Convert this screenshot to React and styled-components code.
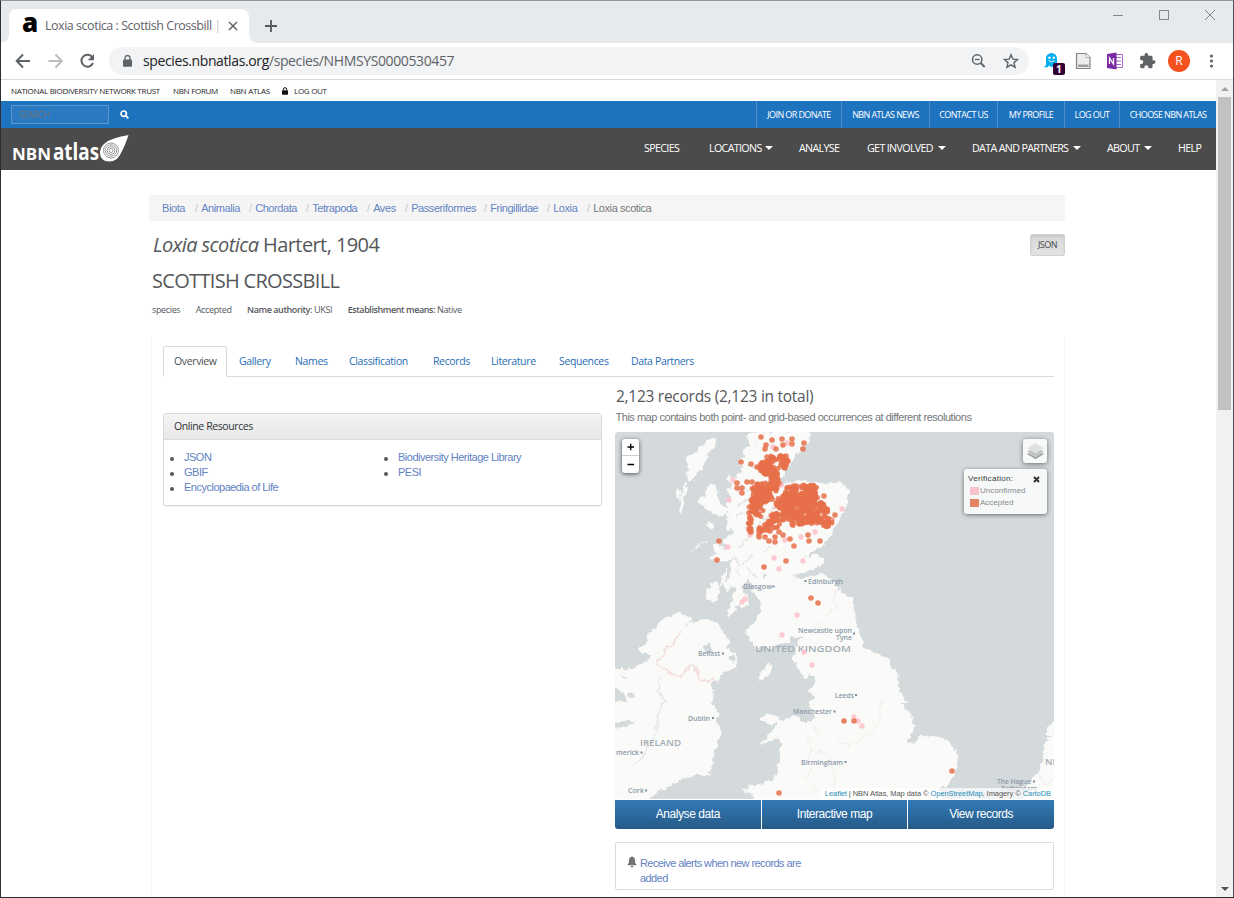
import React from 'react';
import styled, { createGlobalStyle } from 'styled-components';

const GlobalStyle = createGlobalStyle`
  *, *::before, *::after { box-sizing: border-box; }
  html, body { margin: 0; padding: 0; overflow: hidden; background: #fff; }
  body { font-family: 'Open Sans', 'Noto Sans', sans-serif; color: #4a4d50; }
  a { text-decoration: none; color: inherit; }
`;

const sans = `'Open Sans', 'Noto Sans', sans-serif`;
const arial = `'Liberation Sans', Arial, sans-serif`;

/* ---------- browser window ---------- */

const Window = styled.div`
  width: 1234px;
  height: 898px;
  display: flex;
  flex-direction: column;
  border: 1px solid #2b2f36;
  border-top-color: #94979b;
  border-right-color: #4b5058;
  background: #fff;
  overflow: hidden;
`;

const TabStrip = styled.div`
  flex: 0 0 42px;
  display: flex;
  align-items: flex-end;
  padding-left: 8px;
  background: #e6eaed;
`;

const BrowserTab = styled.div`
  position: relative;
  width: 240px;
  height: 34px;
  display: flex;
  align-items: center;
  padding: 0 9px 0 13px;
  border-radius: 8px 8px 0 0;
  background: #fff;
  &::before, &::after {
    content: '';
    position: absolute;
    bottom: 0;
    width: 8px;
    height: 8px;
  }
  &::before {
    left: -8px;
    background: radial-gradient(circle at 0 0, transparent 7.5px, #fff 8px);
  }
  &::after {
    right: -8px;
    background: radial-gradient(circle at 100% 0, transparent 7.5px, #fff 8px);
  }
`;

const Favicon = styled.div`
  width: 15px;
  flex: none;
  margin-top: -8px;
  font-size: 26px;
  line-height: 34px;
  font-weight: 800;
  letter-spacing: -1px;
  color: #000;
`;

const TabTitle = styled.div`
  width: 174px;
  margin-left: 8px;
  padding-bottom: 1px;
  font-size: 12.5px;
  letter-spacing: -0.47px;
  color: #5f6368;
  white-space: nowrap;
  span { color: #c4c6c9; }
`;

const CloseTab = styled.svg`
  width: 10px;
  height: 10px;
  margin-left: auto;
  margin-right: 2px;
  flex: none;
`;

const NewTab = styled.svg`
  width: 14px;
  height: 14px;
  margin: 0 0 10px 15px;
`;

const WindowButtons = styled.svg`
  width: 104px;
  height: 14px;
  margin: 0 17px 21px auto;
`;

const Toolbar = styled.div`
  flex: 0 0 37px;
  display: flex;
  align-items: center;
  padding: 0 12px 0 13px;
  border-bottom: 1px solid #d8dadd;
  background: #fff;
`;

const NavIcons = styled.svg`
  width: 84px;
  height: 20px;
  flex: none;
`;

const AddressBar = styled.div`
  width: 920px;
  height: 28px;
  display: flex;
  align-items: center;
  margin-left: 11px;
  padding: 0 9px 0 14px;
  border-radius: 14px;
  background: #f1f3f4;
  font-size: 14px;
  letter-spacing: -0.38px;
  color: #5f6368;
  b { font-weight: 400; color: #202124; }
  span { padding-bottom: 1px; }
`;

const LockIcon = styled.svg`
  width: 9px;
  height: 12px;
  margin-right: 11px;
`;

const BarIcons = styled.svg`
  width: 50px;
  height: 18px;
  margin-left: auto;
`;

const Extensions = styled.svg`
  width: 176px;
  height: 28px;
  margin-left: 14px;
`;

const Body = styled.div`
  flex: 1;
  min-height: 0;
  display: flex;
`;

const Page = styled.div`
  width: 1215px;
  flex: none;
  display: flex;
  flex-direction: column;
  overflow: hidden;
`;

const Scrollbar = styled.div`
  flex: 1;
  display: flex;
  flex-direction: column;
  align-items: center;
  padding: 7px 0 6px;
  background: #f1f1f1;
`;

const Arrow = styled.i`
  width: 0;
  height: 0;
  border: 4px solid transparent;
  ${p => (p.$down ? 'border-top-color:#505050; border-bottom:0; margin-top:auto;' : 'border-bottom-color:#a3a3a3; border-top:0;')}
`;

const Thumb = styled.div`
  width: 13px;
  height: 313px;
  margin-top: 6px;
  background: #c1c1c1;
`;

/* ---------- site header ---------- */

const TopLinks = styled.div`
  flex: 0 0 21px;
  display: flex;
  align-items: center;
  padding: 0 0 0 10px;
  font-size: 8px;
  letter-spacing: -0.29px;
  color: #1d1d1d;
  white-space: nowrap;
  a { flex: none; width: 149px; margin-right: 13px; }
  a + a { width: 44px; }
  a + a + a { width: 39px; }
  svg { width: 6px; height: 8px; margin: 0 6px 0 0; }
`;

const BlueBar = styled.div`
  flex: 0 0 27px;
  display: flex;
  align-items: center;
  padding-left: 10px;
  background: #1e73be;
`;

const SearchBox = styled.div`
  width: 98px;
  height: 19px;
  padding: 3px 7px;
  border: 1px solid #5a97d0;
  background: #2b7ac1;
  color: #6f7479;
  font-size: 9px;
  line-height: 12px;
  letter-spacing: -0.5px;
`;

const SearchIcon = styled.svg`
  width: 9px;
  height: 9px;
  margin-left: 11px;
`;

const UtilityNav = styled.nav`
  height: 100%;
  display: flex;
  margin-left: auto;
`;

const UtilityLink = styled.a`
  width: ${p => p.$w}px;
  display: flex;
  align-items: center;
  justify-content: center;
  border-left: 1px solid #4b8fcb;
  color: #fff;
  font-size: 9px;
  letter-spacing: -0.6px;
  font-weight: 500;
  white-space: nowrap;
`;

const DarkBar = styled.div`
  flex: 0 0 42px;
  display: flex;
  align-items: flex-start;
  padding: 6px 13px 0 10px;
  background: #4b4b4b;
`;

const Logo = styled.svg`
  width: 120px;
  height: 30px;
  text { font-family: 'Open Sans', sans-serif; fill: #fff; }
`;

const MainNav = styled.nav`
  display: flex;
  gap: 26px;
  margin: 6px 0 0 auto;
`;

const MainLink = styled.a`
  width: ${p => p.$w}px;
  display: flex;
  align-items: center;
  justify-content: space-between;
  color: #fff;
  font-size: 10.7px;
  line-height: 16px;
  letter-spacing: -0.65px;
  font-weight: 500;
  white-space: nowrap;
`;

const Caret = styled.i`
  width: 0;
  height: 0;
  border: 4px solid transparent;
  border-top-color: #fff;
  border-bottom: 0;
`;

/* ---------- content ---------- */

const Content = styled.main`
  width: 916px;
  margin: 25px 0 0 148px;
  display: flex;
  flex-direction: column;
  flex: 1;
  min-height: 0;
`;

const Breadcrumb = styled.nav`
  height: 26px;
  display: flex;
  align-items: center;
  padding-left: 13px;
  border-radius: 3px;
  background: #f5f5f5;
  font: 11px ${arial};
  letter-spacing: -0.42px;
  color: #777;
  white-space: nowrap;
`;

const Crumb = styled.a`
  width: ${p => p.$w}px;
  color: ${p => (p.$last ? '#777b80' : '#6484c4')};
  &:not(:first-child)::before { content: '/'; color: #c8c8c8; margin-right: 3.5px; }
`;

const TitleRow = styled.div`
  display: flex;
  justify-content: space-between;
  padding: 13px 0 0 4px;
  font-size: 20px;
  line-height: 22px;
  letter-spacing: -0.58px;
  color: #54575a;
`;

const JsonButton = styled.button`
  width: 35px;
  height: 22px;
  padding: 0 0 1px;
  border: 1px solid #d0d0d0;
  border-radius: 2px;
  background: linear-gradient(#d9d9d9, #e2e2e2);
  box-shadow: inset 0 2px 3px rgba(0, 0, 0, 0.08);
  font-family: ${sans};
  font-size: 9px;
  letter-spacing: -0.5px;
  color: #45494d;
`;

const CommonName = styled.h2`
  margin: 14px 0 0 3px;
  font-size: 20px;
  line-height: 22px;
  font-weight: 400;
  letter-spacing: -0.68px;
  color: #54575a;
`;

const Meta = styled.div`
  display: flex;
  gap: 15.5px;
  margin: 11px 0 0 3px;
  font-size: 9px;
  line-height: 14px;
  letter-spacing: -0.36px;
  color: #55595d;
  white-space: nowrap;
  strong { font-weight: 600; letter-spacing: -0.42px; }
`;

const Section = styled.section`
  flex: 1;
  min-height: 0;
  margin: 19px 0 0 2px;
  padding: 10px 10px 0 11px;
  border: 1px solid #f7f7f7;
  border-top: 0;
  border-bottom: 0;
`;

const Tabs = styled.nav`
  display: flex;
  height: 31px;
  border-bottom: 1px solid #d9d9d9;
`;

const Tab = styled.a`
  width: ${p => p.$w}px;
  height: ${p => (p.$active ? 31 : 30)}px;
  padding: 0 0 ${p => (p.$active ? 2 : 1)}px ${p => (p.$active ? 10 : 12)}px;
  display: flex;
  align-items: center;
  ${p => p.$active && `
    border: 1px solid #d9d9d9;
    border-bottom-color: #fff;
    border-radius: 3px 3px 0 0;
    background: #fff;
  `}
  font-size: 10.5px;
  letter-spacing: -0.36px;
  color: ${p => (p.$active ? '#4c4f52' : '#1f6db5')};
  white-space: nowrap;
`;

const Columns = styled.div`
  display: flex;
  justify-content: space-between;
`;

const Left = styled.div`
  width: 439px;
  padding-top: 36px;
`;

const Panel = styled.div`
  height: 93px;
  border: 1px solid #d9d9d9;
  border-radius: 3px;
  box-shadow: 0 1px 1px rgba(0, 0, 0, 0.06);
`;

const PanelHead = styled.div`
  height: 26px;
  padding: 0 10px;
  border-bottom: 1px solid #d9d9d9;
  background: linear-gradient(#f4f4f4, #e7e7e7);
  font-size: 10.5px;
  line-height: 24px;
  letter-spacing: -0.4px;
  color: #2f3234;
`;

const Lists = styled.div`
  display: flex;
  padding: 10px 0 0 20px;
`;

const List = styled.ul`
  width: 214px;
  flex: none;
  margin: 0;
  padding: 0;
  list-style: none;
  font: 11px/15px ${arial};
  letter-spacing: -0.5px;
  color: #6282c2;
  white-space: nowrap;
  & + & { width: 200px; }
`;

const ListItem = styled.li`
  display: flex;
  align-items: center;
  &::before {
    content: '';
    width: 4px;
    height: 4px;
    margin: 2px 10px 0 -14px;
    border-radius: 50%;
    background: #54575b;
  }
`;

const Right = styled.div`
  width: 439px;
`;

const RecordsTitle = styled.h3`
  margin: 8px 0 0;
  padding-left: 1px;
  font-size: 15.5px;
  line-height: 22px;
  font-weight: 400;
  letter-spacing: -0.27px;
  color: #54575a;
`;

const MapNote = styled.div`
  margin: 2px 0 6px;
  padding-left: 0.5px;
  font: 11px/17px ${arial};
  letter-spacing: -0.48px;
  color: #74777a;
  white-space: nowrap;
`;

const MapBox = styled.div`
  position: relative;
  height: 367px;
  border-radius: 3px 3px 0 0;
  overflow: hidden;
  background: #d4dadc;
  font-family: ${arial};
  > svg { display: block; }
`;

const ZoomControl = styled.div`
  position: absolute;
  left: 7px;
  top: 7px;
  width: 17px;
  height: 34px;
  border-radius: 3px;
  background: #fff;
  box-shadow: 0 1px 4px rgba(0, 0, 0, 0.65);
  svg { display: block; }
`;

const LayersControl = styled.div`
  position: absolute;
  right: 7px;
  top: 7px;
  width: 24px;
  height: 24px;
  border-radius: 3px;
  background: #f8fafa;
  box-shadow: 0 1px 5px rgba(0, 0, 0, 0.5);
`;

const Legend = styled.div`
  position: absolute;
  right: 7px;
  top: 37px;
  width: 83px;
  height: 45px;
  padding: 4px 7px 0 4px;
  border-radius: 3px;
  background: #f7f9f9;
  box-shadow: 0 1px 4px rgba(0, 0, 0, 0.5);
  font-size: 8px;
  line-height: 12px;
  color: #888b8d;
`;

const LegendHead = styled.div`
  display: flex;
  justify-content: space-between;
  align-items: center;
  color: #3a3c3e;
  letter-spacing: 0.3px;
`;

const LegendRow = styled.div`
  display: flex;
  align-items: center;
  padding-left: 2px;
  &::before {
    content: '';
    width: 9px;
    height: 8px;
    margin-right: 1px;
    background: ${p => p.$color};
  }
`;

const Attribution = styled.div`
  position: absolute;
  right: 0;
  bottom: 0;
  height: 11px;
  padding: 0 3px 0 4px;
  background: rgba(255, 255, 255, 0.7);
  font-size: 7.5px;
  line-height: 11px;
  letter-spacing: -0.07px;
  color: #555;
  white-space: nowrap;
  a { color: #2a8fb8; }
`;

const Actions = styled.div`
  display: flex;
  gap: 1px;
  height: 29px;
  margin-top: 1px;
  border-radius: 0 0 3px 3px;
  overflow: hidden;
`;

const Action = styled.a`
  flex: 1;
  display: flex;
  align-items: center;
  justify-content: center;
  padding-bottom: 1px;
  background: linear-gradient(#337ab7, #265a88);
  color: #fff;
  font: 12px ${arial};
  letter-spacing: -0.44px;
`;

const AlertBox = styled.div`
  height: 48px;
  display: flex;
  margin-top: 13px;
  padding: 13px 0 0 11px;
  border: 1px solid #dcdcdc;
  border-radius: 2px;
  font: 11px/15px ${arial};
  letter-spacing: -0.58px;
  color: #6282c2;
  svg { width: 10px; height: 12px; margin: 0 3px 0 0; }
  div { width: 170px; }
`;

const SCOTLAND = 'M750 432 L810 432 L809 438 L807 443 L801 448 L797 453 L792 460 L788 467 L785 473 L782 479 L776 487 L774 492 L780 487 L787 482 L793 482 L803 480 L817 484 L830 484 L840 483 L846 486 L849 493 L847 499 L845 505 L843 513 L840 518 L836 525 L832 531 L827 540 L822 545 L817 549 L809 553 L803 558 L813 555 L819 556 L823 559 L817 567 L810 570 L803 571 L795 575 L790 577 L800 578 L812 577 L822 574 L829 577 L836 585 L842 593 L851 599 L854 606 L855 620 L859 632 L862 641 L866 649 L878 653 L886 658 L892 668 L899 677 L897 685 L900 692 L906 703 L902 704 L896 700 L891 698 L895 700 L903 705 L909 712 L912 718 L914 727 L911 735 L905 740 L910 744 L914 743 L918 737 L928 736 L937 737 L948 740 L954 747 L957 755 L956 771 L950 782 L943 786 L936 790 L940 793 L938 803 L756 803 L752 793 L742 790 L750 786 L762 784 L772 779 L777 773 L779 764 L781 756 L778 750 L783 743 L778 737 L770 739 L760 745 L769 735 L776 727 L778 722 L767 724 L761 718 L768 714 L776 716 L780 721 L789 718 L799 718 L805 724 L812 722 L815 718 L811 709 L810 702 L815 698 L810 691 L816 684 L815 676 L809 675 L805 678 L800 671 L793 660 L795 650 L800 640 L808 635 L799 637 L793 636 L785 644 L776 643 L770 649 L762 646 L755 650 L750 638 L746 632 L752 624 L757 619 L762 610 L760 599 L753 592 L751 581 L746 580 L741 587 L738 602 L734 613 L728 616 L728 610 L733 600 L736 588 L732 585 L727 591 L724 585 L731 574 L731 563 L736 555 L729 560 L721 559 L718 552 L727 550 L724 541 L729 538 L733 530 L726 529 L731 520 L727 515 L730 509 L725 503 L731 498 L727 490 L733 489 L729 482 L727 475 L735 477 L739 483 L737 472 L744 474 L742 466 L738 459 L746 459 L744 449 L750 447 L748 439 Z';

const IRELAND = 'M611 669 L629 670 L638 665 L646 663 L652 655 L641 652 L637 648 L650 642 L648 635 L657 627 L666 618 L680 613 L692 619 L682 627 L700 620 L717 622 L722 630 L730 642 L725 648 L735 653 L737 660 L733 669 L724 671 L719 680 L710 683 L713 693 L712 703 L718 714 L717 721 L720 737 L714 750 L712 765 L707 774 L711 776 L698 774 L680 779 L672 785 L660 789 L650 799 L650 803 L611 803 Z';

const ISLES = [
  'M714 437 L714 446 L706 457 L703 467 L697 472 L694 479 L690 480 L687 474 L689 467 L686 458 L692 455 L702 446 Z',
  'M685 483 L682 496 L681 507 L679 515 L682 510 L684 500 L687 490 Z',
  'M677 487 L681 491 L680 500 L677 495 Z',
  'M711 484 L717 492 L719 502 L724 508 L729 510 L722 517 L711 512 L705 506 L699 503 L699 498 L706 498 L706 490 Z',
  'M709 521 L714 525 L711 529 L707 525 Z',
  'M712 546 L718 543 L724 550 L731 555 L727 560 L720 561 L711 558 L717 553 Z',
  'M706 541 L697 547 L691 553 L695 549 Z',
  'M710 588 L715 581 L719 589 L718 598 L712 602 L706 597 Z',
  'M727 569 L725 580 L720 588 L722 579 Z',
  'M740 592 L746 594 L748 606 L741 607 L737 599 Z',
  'M771 664 L770 673 L762 680 L758 680 L763 671 L768 665 Z',
  'M815 560 L822 560 L824 563 L818 566 Z',
];

const EUROPE = 'M1058 722 L1049 726 L1047 735 L1053 735 L1048 739 L1045 745 L1043 760 L1038 773 L1031 782 L1022 788 L1029 790 L1023 803 L1058 803 Z';

const BORDERS = 'M680 630 L672 647 L664 648 L666 655 L656 660 L662 668 L672 674 L683 677 L690 664 L697 670 L701 681 L712 679 L719 683';
const BORDERS_FAINT = [
  'M838 588 L833 599 L837 606 L827 614 L816 628 L808 635',
  'M812 723 L818 735 L807 741 L811 750 L809 758 L811 768 L806 778 L815 788 L811 794',
  'M811 750 L828 754 L833 768 L836 781 L833 793',
  'M881 699 L879 722 L873 733 L860 739 L850 746 L841 742 L836 733',
  'M1040 775 L1045 785 L1052 780',
];
const WATERS = [
  'M660 676 L658 688 L664 700 L657 716 L657 731 L648 746 L641 760 L633 764',
  'M738 548 L752 533 L764 519 L775 506 L786 494',
  'M741 484 L748 491', 'M738 505 L750 498', 'M736 517 L749 512', 'M743 529 L751 523',
  'M754 443 L762 453', 'M748 464 L758 468', 'M757 481 L766 490', 'M764 552 L770 545', 'M741 566 L751 556', 'M757 577 L747 568', 'M740 575 L736 558',
];

/* Areas where occurrence records are densest: centre, radii, number of points. */
const DENSE = [
  [765, 468, 7, 6, 34], [771, 461, 6, 5, 18], [783, 461, 5, 7, 26], [773, 472, 7, 6, 24], [775, 482, 5, 8, 26],
  [766, 489, 12, 7, 40], [757, 490, 6, 7, 22], [754, 506, 5, 9, 34], [764, 498, 9, 6, 34], [760, 511, 4, 7, 12],
  [798, 494, 15, 10, 110], [812, 493, 7, 8, 44], [784, 502, 9, 7, 44], [802, 509, 18, 10, 110],
  [821, 511, 8, 9, 46], [827, 522, 6, 5, 24], [797, 521, 9, 5, 36], [779, 517, 9, 4, 30], [774, 524, 8, 4, 20],
  [764, 529, 6, 5, 14], [750, 523, 2, 9, 10], [787, 510, 8, 5, 30], [812, 520, 9, 4, 24],
];

const scatter = (areas, seed) => {
  let s = seed;
  const rnd = () => {
    s = (s * 16807) % 2147483647;
    return s / 2147483647;
  };
  return areas.flatMap(([cx, cy, rx, ry, n]) =>
    Array.from({ length: n }, () => {
      const a = rnd() * Math.PI * 2;
      const r = Math.sqrt(rnd());
      return [Math.round((cx + Math.cos(a) * r * rx) * 2) / 2, Math.round((cy + Math.sin(a) * r * ry) * 2) / 2];
    }));
};

const DENSE_POINTS = scatter(DENSE, 4711);

const ACCEPTED = [
  [761,437],[772,440],[782,439],[792,439],[783,445],[792,444],[776,449],[765,449],[766,445],[804,443],[803,449],
  [741,462],[751,464],[786,456],[787,460],[785,468],[757,467],[762,467],[767,457],
  [747,482],[752,482],[737,483],[737,488],[742,488],[742,493],[749,513],[750,518],[749,523],[749,529],[751,532],[750,531],
  [760,529],[766,526],[759,534],[759,537],[765,537],[769,541],[775,542],[775,537],[770,531],[779,532],[783,535],[790,539],[794,546],[808,535],[809,541],[820,541],[824,496],[835,515],
  [719,541],[717,560],[764,567],[786,561],[811,598],[818,603],[844,721],[854,721],[779,793],[952,771],
];

const UNCONFIRMED = [
  [733,480],[740,490],[729,500],[773,447],[787,443],[781,485],[842,509],[750,535],[774,527],[801,537],[815,532],[785,540],[774,558],[779,569],[803,561],[728,547],
  [742,602],[745,599],[797,615],[782,635],[804,652],[812,665],[854,717],[858,721],[862,726],
];
const UNCONFIRMED_TOP = [[832,519],[774,508],[760,511],[782,485]];

const PLACES = [
  ['Glasgow', 743, 589, 29], ['Edinburgh', 808, 584, 35], ['Newcastle upon', 798, 633, 54], ['Tyne', 836, 640, 16],
  ['Belfast', 698, 656, 22], ['Dublin', 688, 721, 22], ['Leeds', 835, 698, 19], ['Manchester', 793, 714, 39],
  ['Birmingham', 801, 765, 42], ['merick', 616, 755, 23], ['Cork', 628, 793, 16], ['The Hague', 997, 784, 34], ['Rotterdam', 1001, 791, 36],
];
const PLACE_DOTS = [[773.5,586.5],[805.5,581],[854,633.5],[723,653.5],[713,718],[856,695],[834.5,711.5],[845.5,762],[641.5,752.5],[646,790.5],[1034,781.5]];

const MapDrawing = () => (
  <svg width="439" height="367" viewBox="615 432 439 367">
    <defs>
      <filter id="coast" x="-2%" y="-2%" width="104%" height="104%">
        <feTurbulence type="fractalNoise" baseFrequency="0.16" numOctaves="2" seed="8" />
        <feDisplacementMap in="SourceGraphic" scale="7" xChannelSelector="R" yChannelSelector="G" />
        <feGaussianBlur stdDeviation="0.35" />
      </filter>
    </defs>
    <g filter="url(#coast)">
      <g fill="#fafaf8" stroke="#fafaf8" strokeWidth="1" strokeLinejoin="round">
        <path d={SCOTLAND} />
        <path d={IRELAND} />
        <path d={EUROPE} />
        {ISLES.map(d => <path key={d} d={d} />)}
      </g>
      <g fill="#d4dadc">
        <path d="M703 645 L710 643 L712 651 L706 653 Z" />
        <path d="M731 654 L735 658 L733 665 L731 660 Z" />
        <path d="M611 686 L624 693 L628 700 L622 703 L611 699 Z" />
        <path d="M611 722 L635 721 L628 727 L611 729 Z" />
        <path d="M621 672 L626 679 L622 677 Z M630 691 L634 699 L629 697 Z" />
        <path d="M763 573 L767 576 L764 580 Z" />
      </g>
      <g fill="none" stroke="#dfe4e4" strokeWidth="1.2" strokeLinecap="round" strokeLinejoin="round">
        {WATERS.map(d => <path key={d} d={d} />)}
      </g>
      <path d={BORDERS} fill="none" stroke="#f3dfe0" strokeWidth="2" strokeLinejoin="round" />
      <g fill="none" stroke="#f5ecec" strokeWidth="1" strokeLinejoin="round">
        {BORDERS_FAINT.map(d => <path key={d} d={d} />)}
      </g>
    </g>
    <g fontFamily="Open Sans, sans-serif" fill="#8b99a8" fontSize="7.3" fontWeight="600">
      {PLACES.map(([t, x, y, w]) => <text key={t} x={x} y={y} textLength={w} lengthAdjust="spacingAndGlyphs">{t}</text>)}
    </g>
    <g fill="#7f8c9a">
      {PLACE_DOTS.map(([x, y]) => <rect key={x} x={x - 1} y={y - 1} width="2" height="2" />)}
    </g>
    <g fontFamily="Open Sans, sans-serif" fill="#a3adb5" fontSize="9.5" fontWeight="600">
      <text x="755" y="652" textLength="96" lengthAdjust="spacingAndGlyphs">UNITED KINGDOM</text>
      <text x="640" y="746" textLength="41" lengthAdjust="spacingAndGlyphs">IRELAND</text>
      <text x="1045" y="765">NE</text>
    </g>
    <g fill="#ffc0cb" fillOpacity="0.85">
      {UNCONFIRMED.map(([x, y], i) => <circle key={i} cx={x} cy={y} r="2.7" />)}
    </g>
    <g fill="#e6704a" fillOpacity="0.85">
      {DENSE_POINTS.map(([x, y], i) => <circle key={i} cx={x} cy={y} r="2.5" />)}
      {ACCEPTED.map(([x, y], i) => <circle key={i} cx={x} cy={y} r="2.8" />)}
    </g>
    <g fill="#f9b3b8" fillOpacity="0.7">
      {UNCONFIRMED_TOP.map(([x, y], i) => <circle key={i} cx={x} cy={y} r="1.6" />)}
    </g>
  </svg>
);

const Lock = ({ color = '#5f6368' }) => (
  <LockIcon viewBox="0 0 9 12">
    <rect x="0" y="4.5" width="9" height="7.2" rx="1" fill={color} />
    <path d="M2 5V3a2.5 2.5 0 0 1 5 0v2" fill="none" stroke={color} strokeWidth="1.3" />
  </LockIcon>
);

const BrowserToolbar = () => (
  <Toolbar>
    <NavIcons viewBox="0 0 84 20" fill="none" strokeWidth="2">
      <path d="M16 10H3M9 3.5 2.7 10 9 16.500" stroke="#5f6368" />
      <path d="M34.500 10H47.500M41.500 3.500 47.800 10 41.500 16.500" stroke="#babcbf" />
      <path d="M78.300 6.200A6 6 0 1 0 79 12" stroke="#5f6368" />
      <path d="M80 3v6.300h-6.300z" fill="#5f6368" />
    </NavIcons>
    <AddressBar>
      <Lock />
      <span><b>species.nbnatlas.org</b>/species/NHMSYS0000530457</span>
      <BarIcons viewBox="0 0 50 18" fill="none" stroke="#5f6368">
        <circle cx="7.200" cy="7.500" r="4.700" strokeWidth="1.500" />
        <path d="M4.800 7.500h4.800" strokeWidth="1.300" />
        <path d="M10.700 11l4 4" strokeWidth="1.900" />
        <path d="M41 2.800l1.850 4.300 4.700.4-3.550 3.100 1.050 4.600L41 12.800l-4.050 2.400L38 10.600l-3.550-3.100 4.700-.4z" strokeWidth="1.400" />
      </BarIcons>
    </AddressBar>
    <Extensions viewBox="0 0 176 28">
      <path d="M3 18V11.500a5.500 5.500 0 0 1 11 0V18l1 2-2.500.3-2-1.800-2 2-2.200-2L4 20.500 1 20z" fill="#00aef0" />
      <circle cx="6.500" cy="10.800" r="1.200" fill="#fff" /><circle cx="10.800" cy="10.800" r="1.200" fill="#fff" />
      <path d="M5.500 13.500q3 2.800 6 0" fill="none" stroke="#fff" strokeWidth=".9" />
      <rect x="10" y="16" width="12" height="12" rx="2" fill="#330036" />
      <text x="13" y="26" fontFamily="Open Sans" fontSize="10" fontWeight="700" fill="#fff">1</text>
      <path d="M33.500 6.500h9.500l4 4v11h-13.500z" fill="#ececec" stroke="#858585" strokeWidth="1.200" />
      <path d="M43 6.500v4h4" fill="#fff" stroke="#999" strokeWidth=".8" />
      <rect x="35" y="17.500" width="10.500" height="2.500" fill="#9e9e9e" />
      <path d="M72 7.500h7.500v13H72z" fill="#fff" stroke="#a569c6" strokeWidth="1" />
      <path d="M73 10.500h5M73 14h5M73 17.500h5" stroke="#a569c6" strokeWidth="1" />
      <path d="M64 7l9.500-1.500v17L64 21z" fill="#7b2aa5" />
      <path d="M66.500 17v-6l4 6v-6" fill="none" stroke="#fff" strokeWidth="1.300" />
      <path transform="translate(95.700 5.200) scale(.73)" d="M20.500 11H19V7c0-1.100-.9-2-2-2h-4V3.500a2.500 2.500 0 0 0-5 0V5H4c-1.100 0-2 .9-2 2v3.800h1.500c1.500 0 2.700 1.200 2.700 2.700S5 16.200 3.500 16.200H2V20c0 1.100.9 2 2 2h3.800v-1.500c0-1.500 1.200-2.700 2.700-2.700s2.700 1.200 2.700 2.700V22H17c1.100 0 2-.9 2-2v-4h1.500a2.500 2.500 0 0 0 0-5z" fill="#5f6368" />
      <circle cx="136" cy="14" r="11" fill="#f4511e" />
      <text x="136" y="18" textAnchor="middle" fontFamily="Open Sans" fontSize="12" fontWeight="500" fill="#fff">R</text>
      <g fill="#5f6368"><circle cx="168.500" cy="9" r="1.600" /><circle cx="168.500" cy="14" r="1.600" /><circle cx="168.500" cy="19" r="1.600" /></g>
    </Extensions>
  </Toolbar>
);

const UTILITY = [['JOIN OR DONATE', 85], ['NBN ATLAS NEWS', 88], ['CONTACT US', 68], ['MY PROFILE', 67], ['LOG OUT', 55], ['CHOOSE NBN ATLAS', 97]];
const MAIN = [['SPECIES', 39], ['LOCATIONS', 64, 1], ['ANALYSE', 42], ['GET INVOLVED', 79, 1], ['DATA AND PARTNERS', 109, 1], ['ABOUT', 45, 1], ['HELP', 25]];
const CRUMBS = [['Biota', 33], ['Animalia', 54], ['Chordata', 57], ['Tetrapoda', 61], ['Aves', 38], ['Passeriformes', 79], ['Fringillidae', 63], ['Loxia', 40], ['Loxia scotica', 80]];
const TABS = [['Overview', 64], ['Gallery', 56], ['Names', 54], ['Classification', 84], ['Records', 58], ['Literature', 68], ['Sequences', 72], ['Data Partners', 90]];

export default function App() {
  return (
    <Window>
      <GlobalStyle />
      <TabStrip>
        <BrowserTab>
          <Favicon>a</Favicon>
          <TabTitle>Loxia scotica : Scottish Crossbill <span>|</span></TabTitle>
          <CloseTab viewBox="0 0 10 10"><path d="M1 1l8 8M9 1L1 9" stroke="#5f6368" strokeWidth="1.500" /></CloseTab>
        </BrowserTab>
        <NewTab viewBox="0 0 14 14"><path d="M7 1v12M1 7h12" stroke="#55595d" strokeWidth="1.800" /></NewTab>
        <WindowButtons viewBox="0 0 104 14" fill="none" stroke="#85888b">
          <path d="M1 7.500h10" /><rect x="47.500" y="2.500" width="9" height="9" /><path d="M93 2l10 10M103 2L93 12" />
        </WindowButtons>
      </TabStrip>
      <BrowserToolbar />
      <Body>
        <Page>
          <TopLinks>
            <a href="#t">NATIONAL BIODIVERSITY NETWORK TRUST</a>
            <a href="#f">NBN FORUM</a>
            <a href="#n">NBN ATLAS</a>
            <svg viewBox="0 0 9 12"><rect y="5" width="9" height="6.500" rx="1" fill="#111" /><path d="M2 5V3.500a2.500 2.500 0 0 1 5 0V5" fill="none" stroke="#111" strokeWidth="1.500" /></svg>
            <span>LOG OUT</span>
          </TopLinks>
          <BlueBar>
            <SearchBox>SEARCH</SearchBox>
            <SearchIcon viewBox="0 0 9 9" fill="none" stroke="#fff"><circle cx="3.700" cy="3.700" r="2.700" strokeWidth="1.700" /><path d="M5.700 5.700l2.700 2.700" strokeWidth="1.900" /></SearchIcon>
            <UtilityNav>{UTILITY.map(([t, w]) => <UtilityLink key={t} $w={w} href="#u">{t}</UtilityLink>)}</UtilityNav>
          </BlueBar>
          <DarkBar>
            <Logo viewBox="0 0 120 30">
              <text x="1" y="26" fontSize="16" fontWeight="700" textLength="39" lengthAdjust="spacingAndGlyphs">NBN</text>
              <text x="42" y="26" fontSize="22.500" fontWeight="700" textLength="46" lengthAdjust="spacingAndGlyphs">atlas</text>
              <path d="M117.500 1C112 2 103 4 97 7c-5 3-8 7-8 12 0 5 4 8.500 9 8.500 6 0 9-3 11.500-7.500 3.500-6 6-13 8-19z" fill="#fff" />
              <g fill="none" stroke="#8e8e8e" strokeWidth=".9"><circle cx="100" cy="16.500" r="7.500" /><circle cx="100" cy="16.500" r="5.700" /><circle cx="100" cy="16.500" r="3.900" /><circle cx="100" cy="16.500" r="2" /></g>
            </Logo>
            <MainNav>{MAIN.map(([t, w, c]) => <MainLink key={t} $w={w} href="#m">{t}{c && <Caret />}</MainLink>)}</MainNav>
          </DarkBar>
          <Content>
            <Breadcrumb>{CRUMBS.map(([t, w], i) => <Crumb key={t} $w={w} $last={i === 8} href="#c">{t}</Crumb>)}</Breadcrumb>
            <TitleRow>
              <span><em>Loxia scotica</em> Hartert, 1904</span>
              <JsonButton>JSON</JsonButton>
            </TitleRow>
            <CommonName>SCOTTISH CROSSBILL</CommonName>
            <Meta>
              <span>species</span><span>Accepted</span>
              <span><strong>Name authority:</strong> UKSI</span>
              <span><strong>Establishment means:</strong> Native</span>
            </Meta>
            <Section>
              <Tabs>{TABS.map(([t, w], i) => <Tab key={t} $w={w} $active={i === 0} href="#tab">{t}</Tab>)}</Tabs>
              <Columns>
                <Left>
                  <Panel>
                    <PanelHead>Online Resources</PanelHead>
                    <Lists>
                      <List><ListItem>JSON</ListItem><ListItem>GBIF</ListItem><ListItem>Encyclopaedia of Life</ListItem></List>
                      <List><ListItem>Biodiversity Heritage Library</ListItem><ListItem>PESI</ListItem></List>
                    </Lists>
                  </Panel>
                </Left>
                <Right>
                  <RecordsTitle>2,123 records (2,123 in total)</RecordsTitle>
                  <MapNote>This map contains both point- and grid-based occurrences at different resolutions</MapNote>
                  <MapBox>
                    <MapDrawing />
                    <ZoomControl>
                      <svg width="17" height="34" viewBox="0 0 17 34" stroke="#000" strokeWidth="1.300"><path d="M5.500 8h6.500M8.750 4.800v6.400M5.500 25.500h6.500" /><path d="M0 16.500h17" stroke="#ccc" strokeWidth="1" /></svg>
                    </ZoomControl>
                    <LayersControl>
                      <svg width="24" height="24" viewBox="0 0 24 24"><path d="M12.500 10.500l8.500 4.500-8.500 5.200L4 15z" fill="#a2a4a4" /><path d="M12.500 8l8.500 4.500-8.500 5.200L4 12.500z" fill="#bfc1c1" stroke="#f0f0f0" strokeWidth=".5" /><path d="M12.500 4L21 9.200l-8.500 5.300L4 9.200z" fill="#dfe1e1" /></svg>
                    </LayersControl>
                    <Legend>
                      <LegendHead>Verification: <svg width="7" height="7" viewBox="0 0 7 7"><path d="M1 1l5 5M6 1L1 6" stroke="#333" strokeWidth="2" /></svg></LegendHead>
                      <LegendRow $color="#f7c3cd">Unconfirmed</LegendRow>
                      <LegendRow $color="#e28464">Accepted</LegendRow>
                    </Legend>
                    <Attribution><a href="#l">Leaflet</a> | NBN Atlas, Map data © <a href="#o">OpenStreetMap</a>, Imagery © <a href="#k">CartoDB</a></Attribution>
                  </MapBox>
                  <Actions><Action href="#a">Analyse data</Action><Action href="#i">Interactive map</Action><Action href="#v">View records</Action></Actions>
                  <AlertBox>
                    <svg viewBox="0 0 10 12"><path d="M5 0.500c2.300.4 3 2.200 3 4.300 0 2.500.8 3.500 2 4.400H0c1.200-.9 2-1.900 2-4.400 0-2.100.7-3.900 3-4.300zM3.600 10h2.800a1.400 1.400 0 0 1-2.800 0z" fill="#707376" /></svg>
                    <div>Receive alerts when new records are added</div>
                  </AlertBox>
                </Right>
              </Columns>
            </Section>
          </Content>
        </Page>
        <Scrollbar><Arrow /><Thumb /><Arrow $down /></Scrollbar>
      </Body>
    </Window>
  );
}
